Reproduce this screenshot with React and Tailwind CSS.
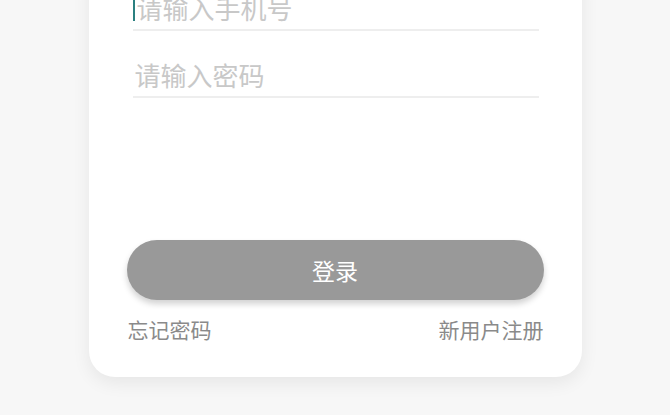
export default function App() {
  return (
    <div
      className="h-[415px] w-[670px] overflow-hidden bg-[#f7f7f7]"
      style={{ fontFamily: '"Noto Sans CJK SC", "Noto Sans", sans-serif' }}
    >
      <div className="mx-auto -mt-[40px] w-[493px] rounded-[26px] bg-white pt-[4px] pb-[34px] px-[38px] shadow-[0_6px_18px_rgba(0,0,0,0.07)]">
        <div className="mx-[6px] mr-[5px]">
          <div className="flex h-[67px] items-end border-b-2 border-[#eeeeee] pb-[8px]">
            <div className="flex items-center text-[26px] leading-[26px] text-[#c8c8c8]">
              <span className="mr-[2px] inline-block h-[26px] w-[2px] bg-[#2b8080]"></span>
              请输入手机号
            </div>
          </div>
          <div className="flex h-[67px] items-end border-b-2 border-[#eeeeee] pb-[8px]">
            <div className="pl-[2px] text-[26px] leading-[26px] text-[#c8c8c8]">请输入密码</div>
          </div>
        </div>

        <button className="mt-[142px] flex h-[60px] w-full items-center justify-center rounded-full bg-[#999999] text-[23px] text-white shadow-[0_4px_6px_rgba(0,0,0,0.18)]">
          登录
        </button>

        <div className="mt-[15px] flex items-center justify-between pl-[1px] text-[21px] leading-[28px] text-[#8a8a8a]">
          <span>忘记密码</span>
          <span>新用户注册</span>
        </div>
      </div>
    </div>
  );
}
